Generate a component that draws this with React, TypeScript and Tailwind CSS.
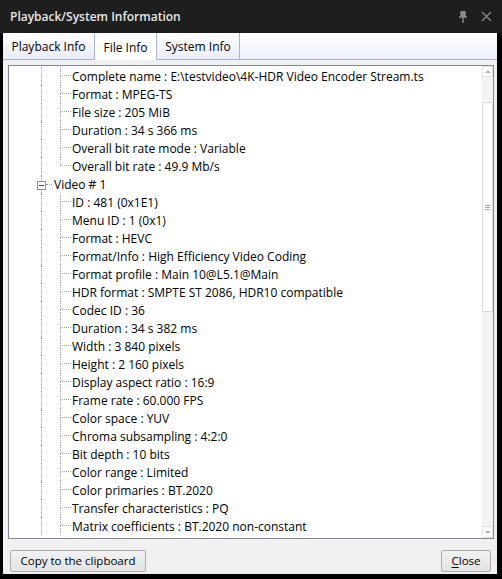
import type { ReactNode } from 'react'

type Kind = 'g' | 'v' | 'c'

const rows: { kind: Kind; text: string; last?: boolean }[] = [
  { kind: 'g', text: 'Complete name : E:\\testvideo\\4K-HDR Video Encoder Stream.ts' },
  { kind: 'g', text: 'Format : MPEG-TS' },
  { kind: 'g', text: 'File size : 205 MiB' },
  { kind: 'g', text: 'Duration : 34 s 366 ms' },
  { kind: 'g', text: 'Overall bit rate mode : Variable' },
  { kind: 'g', text: 'Overall bit rate : 49.9 Mb/s', last: true },
  { kind: 'v', text: 'Video # 1' },
  { kind: 'c', text: 'ID : 481 (0x1E1)' },
  { kind: 'c', text: 'Menu ID : 1 (0x1)' },
  { kind: 'c', text: 'Format : HEVC' },
  { kind: 'c', text: 'Format/Info : High Efficiency Video Coding' },
  { kind: 'c', text: 'Format profile : Main 10@L5.1@Main' },
  { kind: 'c', text: 'HDR format : SMPTE ST 2086, HDR10 compatible' },
  { kind: 'c', text: 'Codec ID : 36' },
  { kind: 'c', text: 'Duration : 34 s 382 ms' },
  { kind: 'c', text: 'Width : 3 840 pixels' },
  { kind: 'c', text: 'Height : 2 160 pixels' },
  { kind: 'c', text: 'Display aspect ratio : 16:9' },
  { kind: 'c', text: 'Frame rate : 60.000 FPS' },
  { kind: 'c', text: 'Color space : YUV' },
  { kind: 'c', text: 'Chroma subsampling : 4:2:0' },
  { kind: 'c', text: 'Bit depth : 10 bits' },
  { kind: 'c', text: 'Color range : Limited' },
  { kind: 'c', text: 'Color primaries : BT.2020' },
  { kind: 'c', text: 'Transfer characteristics : PQ' },
  { kind: 'c', text: 'Matrix coefficients : BT.2020 non-constant' },
]

const dot = 'border-dotted border-[#a0a0a0]'

function TreeRow({ kind, text, last }: { kind: Kind; text: string; last?: boolean }) {
  if (kind === 'v') {
    return (
      <div className="flex h-[18px]">
        <div className="w-[28px] shrink-0" />
        <div className="flex w-[9px] shrink-0 flex-col">
          <div className={`h-[6px] w-0 self-center border-l ${dot}`} />
          <div className="flex h-[9px] w-[9px] items-center justify-center border border-[#919191] bg-white">
            <div className="h-px w-[5px] bg-[#404040]" />
          </div>
          <div className={`h-[3px] w-0 self-center border-l ${dot}`} />
        </div>
        <div className={`h-0 w-[6px] shrink-0 self-center border-t ${dot}`} />
        <span className="pl-[2px] pt-px leading-[18px]">{text}</span>
      </div>
    )
  }
  return (
    <div className="flex h-[18px]">
      <div className="w-[32px] shrink-0" />
      <div className={`w-0 shrink-0 border-l ${dot}`} />
      <div className="w-[18px] shrink-0" />
      <div className="flex w-[11px] shrink-0 flex-col">
        <div className={`h-[9px] w-[11px] border-b border-l ${dot}`} />
        <div className={`h-[9px] w-0 ${last ? '' : `border-l ${dot}`}`} />
      </div>
      <span className="pl-[1px] pt-px leading-[18px]">{text}</span>
    </div>
  )
}

function Tab({ children, active, className }: { children: ReactNode; active?: boolean; className: string }) {
  return (
    <div
      className={`flex items-center justify-center border-r border-[#a9b3d8] text-[12px] ${
        active
          ? 'relative z-10 h-[27px] border-l bg-white pt-[2px]'
          : 'h-[26px] bg-gradient-to-b from-white to-[#eaedf9]'
      } ${className}`}
    >
      {children}
    </div>
  )
}

function ScrollBar() {
  return (
    <div className="flex w-[11px] shrink-0 flex-col bg-[#f3f3f3]">
      <div className="flex h-[11px] items-center justify-center border border-[#e3e3e3] bg-white">
        <div className="h-0 w-0 border-x-[3px] border-b-[3px] border-x-transparent border-b-[#b5b5b5]" />
      </div>
      <div className="h-[25px]" />
      <div className="flex h-[210px] flex-col items-center justify-center gap-[1px] border border-[#dadada] bg-white">
        <div className="h-px w-[5px] bg-[#a8a8a8]" />
        <div className="h-px w-[5px] bg-[#a8a8a8]" />
        <div className="h-px w-[5px] bg-[#a8a8a8]" />
      </div>
      <div className="flex-1" />
      <div className="flex h-[12px] items-center justify-center border border-[#e3e3e3] bg-white">
        <div className="h-0 w-0 border-x-[3px] border-t-[3px] border-x-transparent border-t-[#b5b5b5]" />
      </div>
    </div>
  )
}

function Button({ children, className }: { children: ReactNode; className: string }) {
  return (
    <button
      className={`flex h-[22px] items-center justify-center rounded-[2px] border border-[#adadad] bg-gradient-to-b from-[#f2f2f2] to-[#e3e3e3] text-[11.5px] text-black ${className}`}
    >
      {children}
    </button>
  )
}

export default function App() {
  return (
    <div className="h-[579px] w-[502px] overflow-hidden bg-black font-['Segoe_UI','Open_Sans',sans-serif] text-[12px] text-black">
      <div className="flex h-[33px] items-center bg-[#1e1e1e] pl-[10px] pr-[10px]">
        <span className="text-[12px] font-semibold text-[#e6e6e6]">Playback/System Information</span>
        <div className="ml-auto flex items-center gap-[13px]">
          <svg width="10" height="12" viewBox="0 0 10 12" className="text-[#8a8a8a]">
            <path d="M2.5 0.5h5M3 0.5v5M7 0.5v5M1 6h8M5 6v6" stroke="currentColor" strokeWidth="1.4" fill="none" />
            <rect x="3" y="1" width="4" height="5" fill="currentColor" />
          </svg>
          <svg width="11" height="11" viewBox="0 0 11 11" className="text-[#8a8a8a]">
            <path d="M1 1l9 9M10 1l-9 9" stroke="currentColor" strokeWidth="1.3" />
          </svg>
        </div>
      </div>
      <div className="ml-[3px] mr-[5px] flex h-[541px] flex-col bg-[#f0f0f0]">
        <div className="flex h-[27px] items-start border-b border-[#a9b3d8] bg-gradient-to-b from-white to-[#edf0fb]">
          <Tab className="w-[92px] pt-[1px]">Playback Info</Tab>
          <Tab active className="-ml-px w-[63px]">File Info</Tab>
          <Tab className="w-[83px] pt-[1px]">System Info</Tab>
        </div>
        <div className="ml-[5px] mr-[3px] mt-[5px] flex h-[474px] border border-[#828790] bg-white">
          <div className="flex-1 overflow-hidden pt-px whitespace-nowrap">
            {rows.map((r, i) => (
              <TreeRow key={i} {...r} />
            ))}
          </div>
          <ScrollBar />
        </div>
        <div className="flex flex-1 items-end justify-between pb-[2px] pl-[7px] pr-[6px]">
          <Button className="w-[136px]">Copy to the clipboard</Button>
          <Button className="w-[50px]">
            <span className="underline underline-offset-2">C</span>lose
          </Button>
        </div>
      </div>
    </div>
  )
}
